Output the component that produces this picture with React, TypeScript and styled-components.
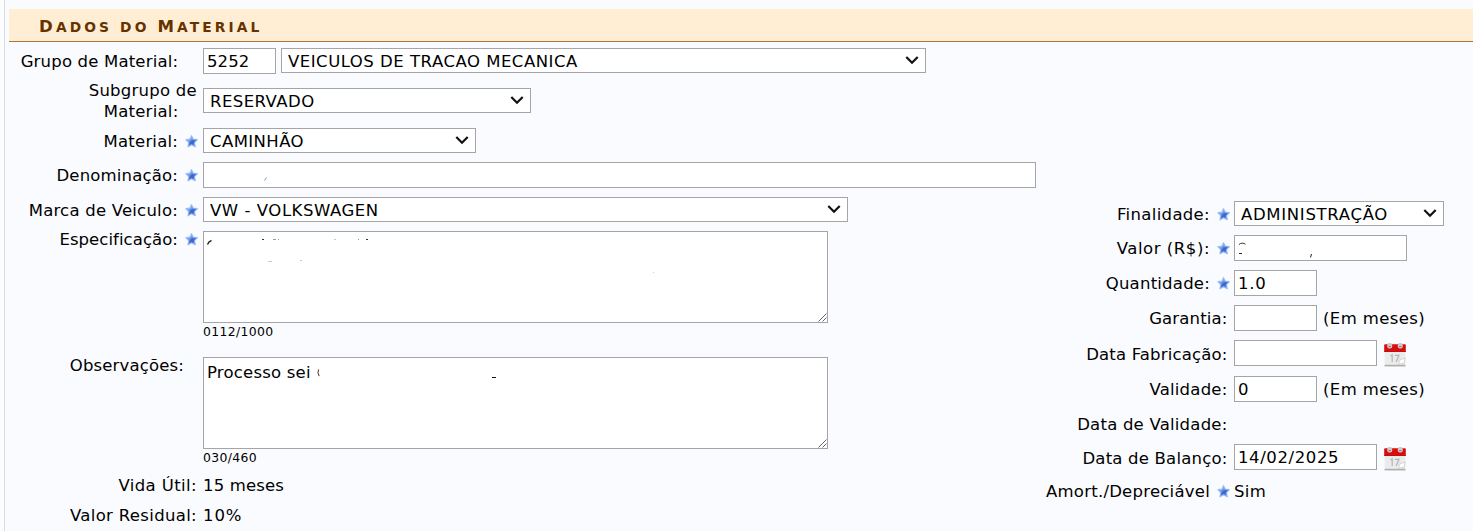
import React from "react";
import styled, { createGlobalStyle, css } from "styled-components";

const Global = createGlobalStyle`
  * { box-sizing: border-box; }
  body { margin: 0; background: #fafbfe; overflow: hidden; }
  body, input, select, textarea {
    font-family: "DejaVu Sans", Verdana, sans-serif;
    font-size: 16.5px;
    color: #000;
  }
`;

const Page = styled.div`
  height: 531px;
  padding-left: 4px;
  background: #fcfdfe;
  overflow: hidden;
`;
const Panel = styled.section`
  height: 531px;
  padding: 9px 0 0 4px;
  border-left: 1px solid #dcdce6;
  background: #fafbfe;
`;
const TitleBar = styled.h2`
  display: flex;
  align-items: baseline;
  gap: 8px;
  height: 33px;
  margin: 0;
  padding: 1px 0 0 30px;
  border-bottom: 1px solid #b47436;
  background: #ffeed4;
  color: #663300;
  font-size: 13.8px;
  font-weight: bold;
  letter-spacing: 3.1px;
  line-height: 33px;
`;
const Word = styled.span<{ $capital?: boolean }>`
  display: block;
  text-transform: uppercase;
  ${(p) => p.$capital && css`&::first-letter { font-size: 16.6px; }`}
`;
const Columns = styled.div`
  display: grid;
  grid-template-columns: 1027px 1fr;
`;
const Column = styled.div<{ $top: number }>`
  display: flex;
  flex-direction: column;
  padding-top: ${(p) => p.$top}px;
`;
const Row = styled.div<{ $labelWidth: number; $height: number; $gap?: number; $alignTop?: boolean }>`
  display: grid;
  grid-template-columns: ${(p) => p.$labelWidth}px 1fr;
  align-items: ${(p) => (p.$alignTop ? "start" : "center")};
  height: ${(p) => p.$height}px;
  margin-top: ${(p) => p.$gap ?? 0}px;
`;
const LabelCell = styled.div<{ $inset: number; $raise?: number }>`
  display: flex;
  justify-content: flex-end;
  align-items: center;
  padding-right: ${(p) => p.$inset}px;
  margin-top: ${(p) => p.$raise ?? 0}px;
  gap: 7px;
`;
const Label = styled.label<{ $spacing?: number }>`
  text-align: right;
  line-height: 21px;
  white-space: nowrap;
  letter-spacing: ${(p) => p.$spacing ?? 0}px;
`;
const SecondLine = styled.span`
  display: block;
  padding-right: 18.5px;
`;
const Controls = styled.div<{ $gap?: number; $center?: boolean }>`
  display: flex;
  align-items: ${(p) => (p.$center ? "center" : "flex-start")};
  gap: ${(p) => p.$gap ?? 5}px;
`;
const field = css`
  display: block;
  margin: 0;
  border: 1px solid #a5a5a8;
  border-radius: 0;
  background: #fff;
  outline: 0;
  appearance: none;
`;
const Input = styled.input<{ $width: number; $spacing?: number }>`
  ${field}
  width: ${(p) => p.$width}px;
  height: 26px;
  padding: 1px 3px 0;
  letter-spacing: ${(p) => p.$spacing ?? 0}px;
`;
const SelectBox = styled.div<{ $width: number }>`
  position: relative;
  width: ${(p) => p.$width}px;
  height: 25px;
`;
const SelectField = styled.select<{ $spacing?: number }>`
  ${field}
  width: 100%;
  height: 25px;
  padding: 1px 28px 0 6px;
  letter-spacing: ${(p) => p.$spacing ?? 0}px;
`;
const Chevron = styled.svg`
  position: absolute;
  top: 7px;
  right: 6px;
  width: 15px;
  height: 10px;
  pointer-events: none;
`;
const AreaBox = styled.div`
  position: relative;
  width: 625px;
  height: 92px;
`;
const Area = styled.textarea`
  ${field}
  width: 625px;
  height: 92px;
  padding: 4px 3px;
  line-height: 21px;
  letter-spacing: 0.2px;
  resize: none;
  overflow: hidden;
`;
const Overlay = styled.svg`
  position: absolute;
  inset: 0;
  width: 100%;
  height: 100%;
  pointer-events: none;
`;
const InputBox = styled.div`
  position: relative;
`;
const Counter = styled.div`
  height: 16px;
  font-size: 12.4px;
  letter-spacing: 0.37px;
  line-height: 17px;
`;
const Value = styled.span<{ $spacing?: number }>`
  line-height: 21px;
  white-space: nowrap;
  letter-spacing: ${(p) => p.$spacing ?? 0}px;
`;
const StarIcon = styled.svg`
  flex: none;
  width: 13px;
  height: 13px;
`;
const CalendarIcon = styled.svg`
  flex: none;
  width: 22px;
  height: 24px;
  margin-top: 3px;
`;

const Star = () => (
  <StarIcon viewBox="0 0 13 13">
    <defs>
      <linearGradient id="star" x1="0" y1="0" x2=".75" y2="1">
        <stop offset="0" stopColor="#b4d0fb" />
        <stop offset=".4" stopColor="#7ca6f0" />
        <stop offset=".6" stopColor="#3f6bd0" />
        <stop offset="1" stopColor="#6f9bec" />
      </linearGradient>
    </defs>
    <path
      d="M6.5 .8 8.3 4.2l4 .5-2.9 2.9.9 4.1-3.7-1.9-3.6 2 .8-4.2L1 4.7l3.9-.5z"
      fill="url(#star)"
      stroke="#8fb4f5"
      strokeOpacity=".8"
      strokeWidth="1.3"
      strokeLinejoin="round"
    />
    <path d="M6.8 4.8 7.6 6.3l2.6.1-1.6 1.8.4 1.7-2.2-1.2-1.7.6.7-1.9z" fill="#2f5cc4" opacity=".5" />
  </StarIcon>
);

const Calendar = () => (
  <CalendarIcon viewBox="0 0 22 24">
    <rect x=".6" y="8" width="20.8" height="15.3" rx=".8" fill="#ebebeb" />
    <path d="M.6 21.8h20.8v1.6H.6z" fill="#adadad" />
    <path d="M.2 2.2q0-1 1-1h19.6q1 0 1 1v6.6H.2z" fill="#d90d0d" />
    <path d="M.2 8h21.6v.9H.2z" fill="#b90c0c" />
    <rect x="3.2" y="0" width="5" height="5.4" rx="2" fill="#d2c6c6" />
    <rect x="13.8" y="0" width="5" height="5.4" rx="2" fill="#d2c6c6" />
    <path d="M4.5 3.6h2.4M15.1 3.6h2.4" stroke="#8b7777" />
    <path d="M6.5 13l1.7-1v7M10.8 12.3h4.2l-2.8 6.7" fill="none" stroke="#b4b4b4" strokeWidth="1.2" />
    <path d="M15 19.5q0-3.5 3.5-3.5l2.8-.8-1.2 5-4.8 1.2z" fill="#fff" stroke="#c9c9c9" strokeWidth=".8" />
  </CalendarIcon>
);

const Select = ({ value, width, spacing }: { value: string; width: number; spacing?: number }) => (
  <SelectBox $width={width}>
    <SelectField $spacing={spacing} defaultValue={value}>
      <option>{value}</option>
    </SelectField>
    <Chevron viewBox="0 0 15 10">
      <path d="M1.3 2 7 7.7 12.7 2" fill="none" stroke="#111" strokeWidth="2.2" />
    </Chevron>
  </SelectBox>
);

const Grip = () => (
  <path d="M615.5 90.5l8-8M619.5 90.5l4-4" stroke="#666" strokeWidth="1" fill="none" />
);

interface FieldProps {
  label: React.ReactNode;
  required?: boolean;
  inset?: number;
  raise?: number;
  spacing?: number;
  height?: number;
  gap?: number;
  alignTop?: boolean;
  controlsGap?: number;
  centered?: boolean;
  labelWidth?: number;
  children?: React.ReactNode;
}
const Field = ({ label, required, inset = 5, raise, spacing, height = 26, gap, alignTop, controlsGap, centered, labelWidth = 194, children }: FieldProps) => (
  <Row $labelWidth={labelWidth} $height={height} $gap={gap} $alignTop={alignTop}>
    <LabelCell $inset={inset} $raise={raise}>
      <Label $spacing={spacing}>{label}</Label>
      {required && <Star />}
    </LabelCell>
    <Controls $gap={controlsGap} $center={centered}>{children}</Controls>
  </Row>
);
const SideField = ({ required, ...rest }: FieldProps) => (
  <Field labelWidth={198} inset={required ? 4 : 6.5} raise={1} required={required} {...rest} />
);

export default function App() {
  return (
    <Page>
      <Global />
      <Panel>
        <TitleBar>
          <Word $capital>Dados</Word>
          <Word>do</Word>
          <Word $capital>Material</Word>
        </TitleBar>
        <Columns>
          <Column $top={6}>
            <Field label="Grupo de Material:" inset={24.8} spacing={0.18}>
              <Input $width={73} defaultValue="5252" $spacing={0.1} />
              <Select width={645} value="VEICULOS DE TRACAO MECANICA" spacing={0.51} />
            </Field>
            <Field label={<>Subgrupo de<SecondLine>Material:</SecondLine></>} inset={6} height={43} gap={5} spacing={0.25} raise={1}>
              <Select width={328} value="RESERVADO" spacing={0.45} />
            </Field>
            <Field label="Material:" required height={25} gap={6} spacing={0.2} raise={1}>
              <Select width={273} value="CAMINHÃO" spacing={0.42} />
            </Field>
            <Field label="Denominação:" required gap={9} spacing={0.17}>
              <InputBox>
                <Input $width={833} />
                <Overlay><path d="M61.5 18.5l2-3" stroke="#51a6dc" /></Overlay>
              </InputBox>
            </Field>
            <Field label="Marca de Veiculo:" required height={25} gap={9} spacing={0.22} raise={1}>
              <Select width={645} value="VW - VOLKSWAGEN" spacing={0.55} />
            </Field>
            <Field label="Especificação:" required height={108} gap={9} alignTop raise={-2} spacing={0.06}>
              <div>
                <AreaBox>
                  <Area />
                  <Overlay>
                    <path d="M4.5 13.5q1-3 4-4" stroke="#222" strokeWidth="1.4" fill="none" />
                    <path d="M59 8.5h2M163 8.5h2" stroke="#333" />
                    <path d="M70 8.5h3M75 8.5h1M155 8.5h1" stroke="#999" />
                    <path d="M131 8.5h2M65 30.5h4M97 29.5h2M450 41.5h1" stroke="#ccc" />
                    <Grip />
                  </Overlay>
                </AreaBox>
                <Counter>0112/1000</Counter>
              </div>
            </Field>
            <Field label="Observações:" height={108} gap={18} alignTop raise={-2} inset={19} spacing={0.16}>
              <div>
                <AreaBox>
                  <Area defaultValue="Processo sei" />
                  <Overlay>
                    <path d="M115.6 12.5q-1.6 3.2 .6 6.6" stroke="#4a2a20" fill="none" />
                    <path d="M289 20.5h4" stroke="#111" />
                    <Grip />
                  </Overlay>
                </AreaBox>
                <Counter>030/460</Counter>
              </div>
            </Field>
            <Field label="Vida Útil:" inset={6} height={26} gap={7} spacing={0.4}>
              <Value $spacing={0.15}>15 meses</Value>
            </Field>
            <Field label="Valor Residual:" inset={6} height={26} gap={4} spacing={0.33}>
              <Value $spacing={0.9}>10%</Value>
            </Field>
          </Column>
          <Column $top={159}>
            <SideField label="Finalidade:" required height={25} spacing={0.33}>
              <Select width={210} value="ADMINISTRAÇÃO" spacing={0.68} />
            </SideField>
            <SideField label="Valor (R$):" required gap={9} spacing={0.55}>
              <InputBox>
                <Input $width={173} />
                <Overlay>
                  <path d="M5 9.6q1-1.4 3.4-1.4 1.6 0 3 1" stroke="#333" fill="none" />
                  <path d="M5 18.5h3" stroke="#222" />
                  <path d="M77.5 19l-1 3.5" stroke="#222" />
                </Overlay>
              </InputBox>
            </SideField>
            <SideField label="Quantidade:" required gap={9} spacing={0.22}>
              <Input $width={83} defaultValue="1.0" $spacing={0.7} />
            </SideField>
            <SideField label="Garantia:" gap={9} controlsGap={6} centered spacing={0.15}>
              <Input $width={83} />
              <Value $spacing={0.4}>(Em meses)</Value>
            </SideField>
            <SideField label="Data Fabricação:" gap={9} controlsGap={7} spacing={0.17}>
              <Input $width={143} />
              <Calendar />
            </SideField>
            <SideField label="Validade:" gap={10} controlsGap={6} centered spacing={0.22}>
              <Input $width={83} defaultValue="0" $spacing={0.5} />
              <Value $spacing={0.4}>(Em meses)</Value>
            </SideField>
            <SideField label="Data de Validade:" gap={9} spacing={0.22} raise={0} />
            <SideField label="Data de Balanço:" gap={7} controlsGap={7} spacing={0.2}>
              <Input $width={143} defaultValue="14/02/2025" $spacing={0.6} />
              <Calendar />
            </SideField>
            <SideField label="Amort./Depreciável" required gap={8} spacing={0.24} raise={0}>
              <Value $spacing={0.4}>Sim</Value>
            </SideField>
          </Column>
        </Columns>
      </Panel>
    </Page>
  );
}
